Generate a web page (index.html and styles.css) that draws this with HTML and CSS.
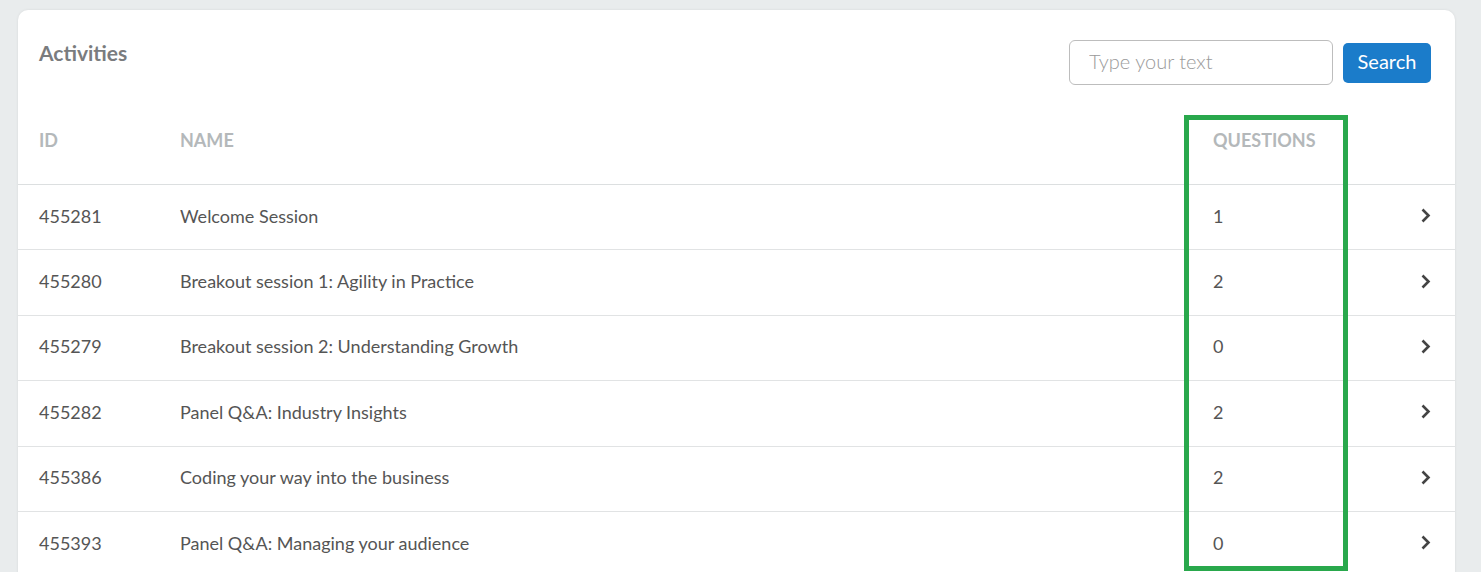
FILE: index.html
```html
<!DOCTYPE html>
<html>
<head>
<meta charset="utf-8">
<link rel="stylesheet" href="styles.css">
</head>
<body>
<div class="page">
  <div class="card">
    <div class="top">
      <h1 class="title">Activities</h1>
      <div class="search">
        <input class="search-input" type="text" placeholder="Type your text">
        <button class="search-btn">Search</button>
      </div>
    </div>
    <div class="row head">
      <div class="c-id">ID</div>
      <div class="c-name">NAME</div>
      <div class="c-q">QUESTIONS</div>
      <div class="c-go"></div>
    </div>
    <div class="row">
      <div class="c-id">455281</div>
      <div class="c-name">Welcome Session</div>
      <div class="c-q">1</div>
      <div class="c-go"><svg class="chev" viewBox="0 0 11 17"><path d="M2.5 2.5l6 6-6 6"/></svg></div>
    </div>
    <div class="row">
      <div class="c-id">455280</div>
      <div class="c-name">Breakout session 1: Agility in Practice</div>
      <div class="c-q">2</div>
      <div class="c-go"><svg class="chev" viewBox="0 0 11 17"><path d="M2.5 2.5l6 6-6 6"/></svg></div>
    </div>
    <div class="row">
      <div class="c-id">455279</div>
      <div class="c-name">Breakout session 2: Understanding Growth</div>
      <div class="c-q">0</div>
      <div class="c-go"><svg class="chev" viewBox="0 0 11 17"><path d="M2.5 2.5l6 6-6 6"/></svg></div>
    </div>
    <div class="row">
      <div class="c-id">455282</div>
      <div class="c-name">Panel Q&amp;A: Industry Insights</div>
      <div class="c-q">2</div>
      <div class="c-go"><svg class="chev" viewBox="0 0 11 17"><path d="M2.5 2.5l6 6-6 6"/></svg></div>
    </div>
    <div class="row">
      <div class="c-id">455386</div>
      <div class="c-name">Coding your way into the business</div>
      <div class="c-q">2</div>
      <div class="c-go"><svg class="chev" viewBox="0 0 11 17"><path d="M2.5 2.5l6 6-6 6"/></svg></div>
    </div>
    <div class="row">
      <div class="c-id">455393</div>
      <div class="c-name">Panel Q&amp;A: Managing your audience</div>
      <div class="c-q">0</div>
      <div class="c-go"><svg class="chev" viewBox="0 0 11 17"><path d="M2.5 2.5l6 6-6 6"/></svg></div>
    </div>
  </div>
  <div class="highlight"></div>
</div>
</body>
</html>
```
FILE: styles.css
```css
html, body {
  margin: 0;
  padding: 0;
  background: #e9eced;
  height: 100%;
  overflow: hidden;
}
body {
  font-family: Lato, "Liberation Sans", sans-serif;
  color: #555;
}
.page {
  position: relative;
  padding: 10px 26px 0 18px;
}
.card {
  background: #fff;
  border-radius: 10px 10px 0 0;
  box-shadow: 0 0 3px rgba(0,0,0,0.08);
  min-height: 600px;
}
.top {
  display: flex;
  justify-content: space-between;
  align-items: flex-start;
  padding: 30px 24px 0 21px;
}
.title {
  margin: 0;
  font-size: 21px;
  line-height: 26px;
  font-weight: 700;
  color: #7a7c7e;
}
.search {
  display: flex;
  align-items: center;
  gap: 10px;
}
.search-input {
  box-sizing: border-box;
  width: 264px;
  height: 45px;
  border: 1px solid #bdbdbd;
  border-radius: 6px;
  padding: 0 19px 3px;
  font-family: Lato, "Liberation Sans", sans-serif;
  font-size: 20px;
  font-weight: 300;
  color: #555;
  outline: none;
}
.search-input::placeholder {
  color: #9a9a9a;
}
.search-btn {
  box-sizing: border-box;
  width: 88px;
  height: 40px;
  border: none;
  border-radius: 5px;
  background: #1b7cca;
  color: #fff;
  font-family: Lato, "Liberation Sans", sans-serif;
  font-size: 20px;
  font-weight: 400;
  padding: 0 0 3px;
}
.row {
  box-sizing: border-box;
  display: flex;
  align-items: center;
  height: 65.4px;
  border-top: 1px solid #e1e3e4;
  padding: 0 24px 3px 21px;
  font-size: 18px;
}
.row.head {
  height: 90px;
  margin-top: 10px;
  padding-bottom: 0;
  border-top: none;
  border-bottom: 1px solid #dcdfe0;
  font-size: 18px;
  font-weight: 700;
  color: #b4b8ba;
}
.row.head + .row {
  border-top: none;
  height: 64.4px;
}
.c-id { width: 141px; }
.c-name { flex: 1; }
.c-q { width: 206px; }
.c-go {
  width: 12px;
  display: flex;
  justify-content: flex-end;
}
.chev {
  width: 11px;
  height: 17px;
  fill: none;
  stroke: #444;
  stroke-width: 2.6;
}
.highlight {
  position: absolute;
  left: 1184px;
  top: 115px;
  width: 164px;
  height: 456px;
  box-sizing: border-box;
  border: 5px solid #29a84c;
}
```
